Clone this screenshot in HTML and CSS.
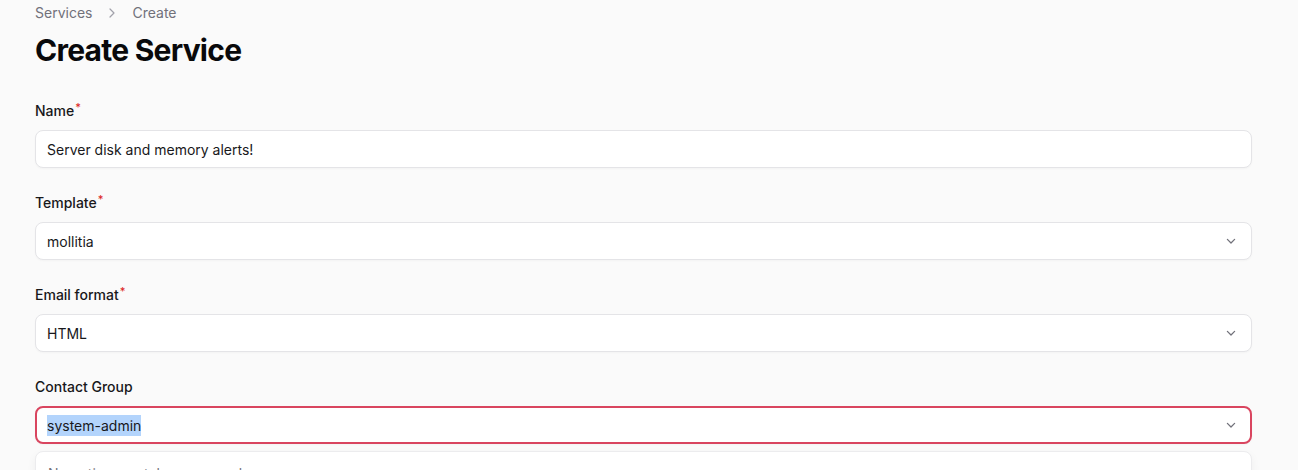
FILE: index.html
```html
<!DOCTYPE html>
<html>
<head>
<meta charset="utf-8">
<link rel="stylesheet" href="styles.css">
</head>
<body>
<div class="page">
  <nav class="breadcrumb">
    <span>Services</span>
    <svg class="bc-sep" viewBox="0 0 20 20" width="16" height="16"><path d="M7.5 5l5 5-5 5" fill="none" stroke="currentColor" stroke-width="1.5" stroke-linecap="round" stroke-linejoin="round"/></svg>
    <span>Create</span>
  </nav>
  <h1 class="title">Create Service</h1>
  <form class="form">
    <div class="field">
      <label class="label">Name<span class="req">*</span></label>
      <div class="input"><span class="value">Server disk and memory alerts!</span></div>
    </div>
    <div class="field">
      <label class="label">Template<span class="req">*</span></label>
      <div class="input select"><span class="value">mollitia</span>
        <svg class="chev" viewBox="0 0 20 20" width="16" height="16"><path d="M5.5 8l4.5 4.5L14.5 8" fill="none" stroke="currentColor" stroke-width="1.6" stroke-linecap="round" stroke-linejoin="round"/></svg>
      </div>
    </div>
    <div class="field">
      <label class="label">Email format<span class="req">*</span></label>
      <div class="input select"><span class="value">HTML</span>
        <svg class="chev" viewBox="0 0 20 20" width="16" height="16"><path d="M5.5 8l4.5 4.5L14.5 8" fill="none" stroke="currentColor" stroke-width="1.6" stroke-linecap="round" stroke-linejoin="round"/></svg>
      </div>
    </div>
    <div class="field">
      <label class="label">Contact Group</label>
      <div class="input select focused"><span class="value"><span class="selected">system-admin</span></span>
        <svg class="chev" viewBox="0 0 20 20" width="16" height="16"><path d="M5.5 8l4.5 4.5L14.5 8" fill="none" stroke="currentColor" stroke-width="1.6" stroke-linecap="round" stroke-linejoin="round"/></svg>
      </div>
      <div class="dropdown">No options match your search.</div>
    </div>
  </form>
</div>
</body>
</html>
```
FILE: styles.css
```css
* { box-sizing: border-box; }
html, body { margin: 0; padding: 0; }
body {
  background: #fafafa;
  font-family: Inter, "Noto Sans", sans-serif;
  color: #0a0a0a;
  overflow: hidden;
  height: 470px;
}
.page {
  padding: 3px 0 0 35px;
  width: 1252px;
}
.breadcrumb {
  display: flex;
  align-items: center;
  gap: 12px;
  font-size: 14px;
  line-height: 20px;
  color: #71717a;
  height: 20px;
}
.bc-sep { color: #a1a1aa; }
.title {
  margin: 9px 0 0;
  font-size: 30px;
  line-height: 36px;
  font-weight: 700;
  letter-spacing: -0.75px;
  color: #09090b;
}
.form {
  margin-top: 30px;
  display: flex;
  flex-direction: column;
  gap: 22px;
}
.field {
  display: flex;
  flex-direction: column;
  gap: 8px;
  position: relative;
}
.label {
  display: block;
  height: 24px;
  padding-top: 2px;
  font-size: 14px;
  line-height: 22px;
  font-weight: 500;
  color: #18181b;
}
.req {
  color: #dc2626;
  font-size: 11px;
  font-weight: 500;
  position: relative;
  top: -5px;
  margin-left: 1px;
  line-height: 0;
}
.input {
  height: 38px;
  background: #fff;
  border: 1px solid #e4e4e7;
  border-radius: 8px;
  display: flex;
  align-items: center;
  padding: 0 11px;
  font-size: 14px;
  color: #18181b;
  box-shadow: 0 1px 2px rgba(0,0,0,0.03);
}
.select { justify-content: space-between; }
.chev { color: #71717a; margin-right: 1px; }
.focused {
  border: 2px solid #d9455f;
  padding: 0 10px;
}
.selected {
  background: #b3d4fc;
  padding: 2px 0;
}
.dropdown {
  margin-top: -1px;
  height: 40px;
  background: #fff;
  border: 1px solid #ececee;
  border-radius: 8px;
  box-shadow: 0 4px 10px rgba(0,0,0,0.05);
  padding: 12px 12px 0;
  font-size: 14px;
  line-height: 20px;
  color: #71717a;
}
```
